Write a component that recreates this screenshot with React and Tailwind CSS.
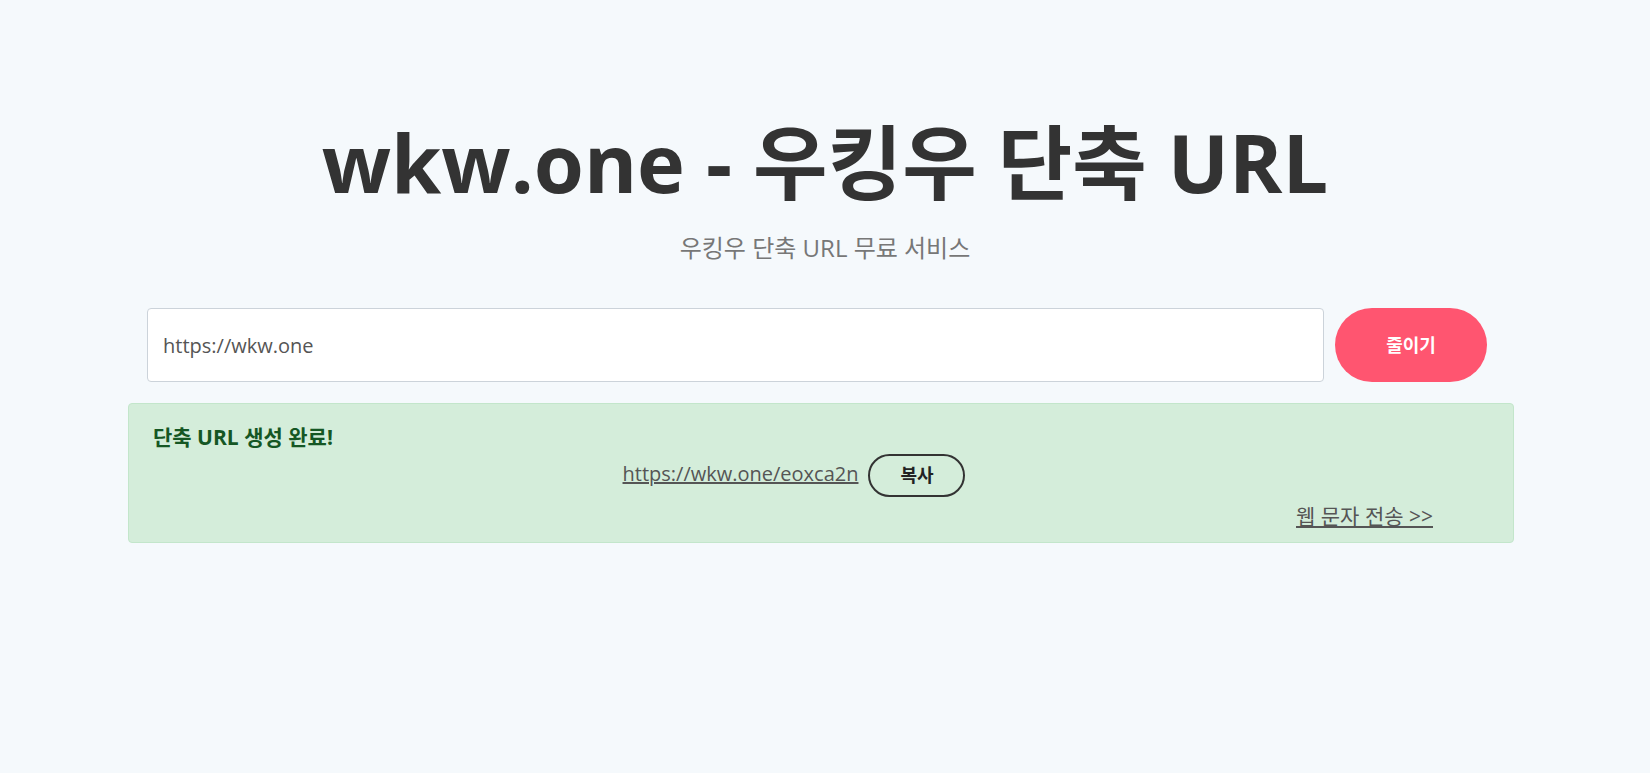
export default function App() {
  const font = { fontFamily: '"Open Sans", "Noto Sans CJK KR", sans-serif' };

  return (
    <div
      className="min-h-screen bg-[#f5f9fc] text-[#333]"
      style={font}
    >
      <div className="pt-[102px] flex flex-col items-center">
        <h1 className="text-[81px] font-bold leading-[120px] text-[#333]">
          wkw.one - 우킹우 단축 URL
        </h1>
        <p className="mt-[10px] text-[24px] leading-[32px] text-[#777]">우킹우 단축 URL 무료 서비스</p>
      </div>

      <div className="mt-[44px] pl-[147px] flex items-center gap-[11px]">
        <input
          type="text"
          defaultValue="https://wkw.one"
          className="w-[1177px] h-[74px] bg-white border border-[#ccd3da] rounded-[4px] px-[15px] text-[20px] text-[#555] outline-none"
          style={font}
        />
        <button className="w-[152px] h-[74px] rounded-full bg-[#ff5570] text-white text-[18px] font-bold">
          줄이기
        </button>
      </div>

      <div className="mt-[21px] ml-[128px] w-[1386px] h-[140px] bg-[#d4edda] border border-[#c3e6cb] rounded-[4px] px-[24px] pt-[20px]">
        <p className="text-[21px] font-bold text-[#155724] leading-[26px]">단축 URL 생성 완료!</p>
        <div className="flex justify-center items-center gap-[10px] mt-[4px] pr-[54px]">
          <a href="#" className="text-[20px] text-[#555] underline leading-[26px] mt-[-4px]">
            https://wkw.one/eoxca2n
          </a>
          <button className="w-[97px] h-[43px] rounded-full border-2 border-[#333] text-[18px] font-bold text-[#222]">
            복사
          </button>
        </div>
        <div className="flex justify-end pr-[56px] mt-[5px]">
          <a href="#" className="text-[21px] text-[#555] underline leading-[28px]">
            웹 문자 전송 &gt;&gt;
          </a>
        </div>
      </div>
    </div>
  );
}
